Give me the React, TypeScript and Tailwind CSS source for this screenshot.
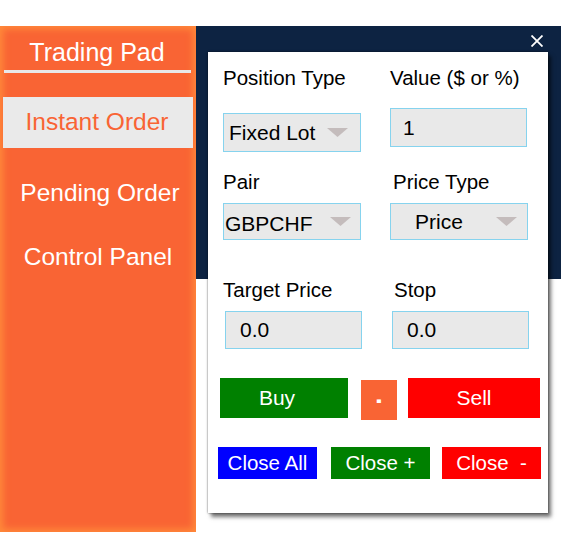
import React from "react";

const Arrow = () => (
  <svg width="21" height="9" viewBox="0 0 21 9" className="shrink-0">
    <polygon points="0,0 21,0 10.5,9" fill="#c4bcbc" />
  </svg>
);

const Label = ({ children }: { children: React.ReactNode }) => (
  <div className="text-[20.5px] leading-[24px] text-black">{children}</div>
);

export default function App() {
  return (
    <div
      className="w-[561px] h-[556px] bg-white overflow-hidden"
      style={{ fontFamily: '"Liberation Sans", Arial, sans-serif' }}
    >
      <div className="flex pt-[26px]">
        {/* Sidebar */}
        <div className="w-[196px] h-[506px] shrink-0 bg-[#f96434] shadow-[inset_0_0_7px_3px_#ff8a3a] flex flex-col items-stretch">
          <div className="text-white text-[25px] leading-[30px] text-center pt-[11px] pr-[2px]">
            Trading Pad
          </div>
          <div className="mx-[4px] mt-[3px] h-[3px] bg-[#e8e8e8] mr-[5px]" />
          <div className="mx-[3px] mt-[24px] h-[51px] bg-[#eaeaea] flex items-center justify-center text-[#f96434] text-[24.5px] pr-[2px] pb-[1px]">
            Instant Order
          </div>
          <div className="mt-[31px] text-white text-[24.5px] leading-[28px] text-center pl-[4px]">
            Pending Order
          </div>
          <div className="mt-[36px] text-white text-[24.5px] leading-[28px] text-center pr-[0px]">
            Control Panel
          </div>
        </div>

        {/* Right area */}
        <div className="flex-1 flex flex-col">
          <div className="h-[253px] bg-[#0d2342] flex justify-end pt-[9px] pr-[18px]">
            <svg width="12" height="12" viewBox="0 0 12 12">
              <path d="M0.5 0.5 L11.5 11.5 M11.5 0.5 L0.5 11.5" stroke="white" strokeWidth="1.8" />
            </svg>
          </div>

          {/* Panel */}
          <div className="-mt-[227px] ml-[12px] w-[340px] h-[461px] bg-white shadow-[0_0_2px_rgba(0,0,0,0.6),3px_4px_4px_rgba(0,0,0,0.55)] flex flex-col">
            <div className="pl-[15px] pt-[14px] flex">
              <div className="w-[167px]">
                <Label>Position Type</Label>
                <div className="mt-[23px] w-[138px] h-[39px] bg-[#e9e9e9] border border-[#86d3ee] flex items-center pl-[5px] pr-[12px] justify-between">
                  <span className="text-[21px]">Fixed Lot</span>
                  <Arrow />
                </div>
                <div className="mt-[18px]">
                  <Label>Pair</Label>
                </div>
                <div className="mt-[9px] w-[138px] h-[37px] bg-[#e9e9e9] border border-[#86d3ee] flex items-center pl-[1px] pr-[9px] justify-between">
                  <span className="text-[21px] pt-[4px]">GBPCHF</span>
                  <Arrow />
                </div>
                <div className="mt-[38px]">
                  <Label>Target Price</Label>
                </div>
                <div className="mt-[9px] ml-[2px] w-[137px] h-[38px] bg-[#e9e9e9] border border-[#86d3ee] flex items-center pl-[14px]">
                  <span className="text-[21px]">0.0</span>
                </div>
              </div>
              <div className="w-[140px]">
                <Label>Value ($ or %)</Label>
                <div className="mt-[18px] w-[137px] h-[39px] bg-[#e9e9e9] border border-[#86d3ee] flex items-center pl-[12px]">
                  <span className="text-[21px]">1</span>
                </div>
                <div className="mt-[23px] pl-[3px]">
                  <Label>Price Type</Label>
                </div>
                <div className="mt-[9px] w-[138px] h-[37px] bg-[#e9e9e9] border border-[#86d3ee] flex items-center pl-[24px] pr-[10px] justify-between">
                  <span className="text-[21px]">Price</span>
                  <Arrow />
                </div>
                <div className="mt-[38px] pl-[4px]">
                  <Label>Stop</Label>
                </div>
                <div className="mt-[9px] ml-[2px] w-[137px] h-[38px] bg-[#e9e9e9] border border-[#86d3ee] flex items-center pl-[14px]">
                  <span className="text-[21px]">0.0</span>
                </div>
              </div>
            </div>

            <div className="mt-[29px] ml-[12px] flex items-start">
              <div className="w-[128px] h-[40px] bg-[#008000] text-white text-[21px] flex items-center justify-center pr-[14px]">
                Buy
              </div>
              <div className="ml-[13px] mt-[2px] w-[36px] h-[40px] bg-[#f96434] text-white text-[16px] font-bold flex items-center justify-center">
                <span className="inline-block scale-y-[1.8]">-</span>
              </div>
              <div className="ml-[11px] w-[132px] h-[40px] bg-[#ff0000] text-white text-[21px] flex items-center justify-center">
                Sell
              </div>
            </div>

            <div className="mt-[27px] ml-[10px] flex items-start">
              <div className="w-[99px] h-[32px] bg-[#0000ff] text-white text-[20.5px] flex items-center justify-center">
                Close All
              </div>
              <div className="ml-[14px] w-[99px] h-[32px] bg-[#008000] text-white text-[20.5px] flex items-center justify-center">
                Close +
              </div>
              <div className="ml-[12px] w-[99px] h-[32px] bg-[#ff0000] text-white text-[20.5px] flex items-center justify-center whitespace-pre">
                {"Close  -"}
              </div>
            </div>
          </div>
        </div>
      </div>
    </div>
  );
}
